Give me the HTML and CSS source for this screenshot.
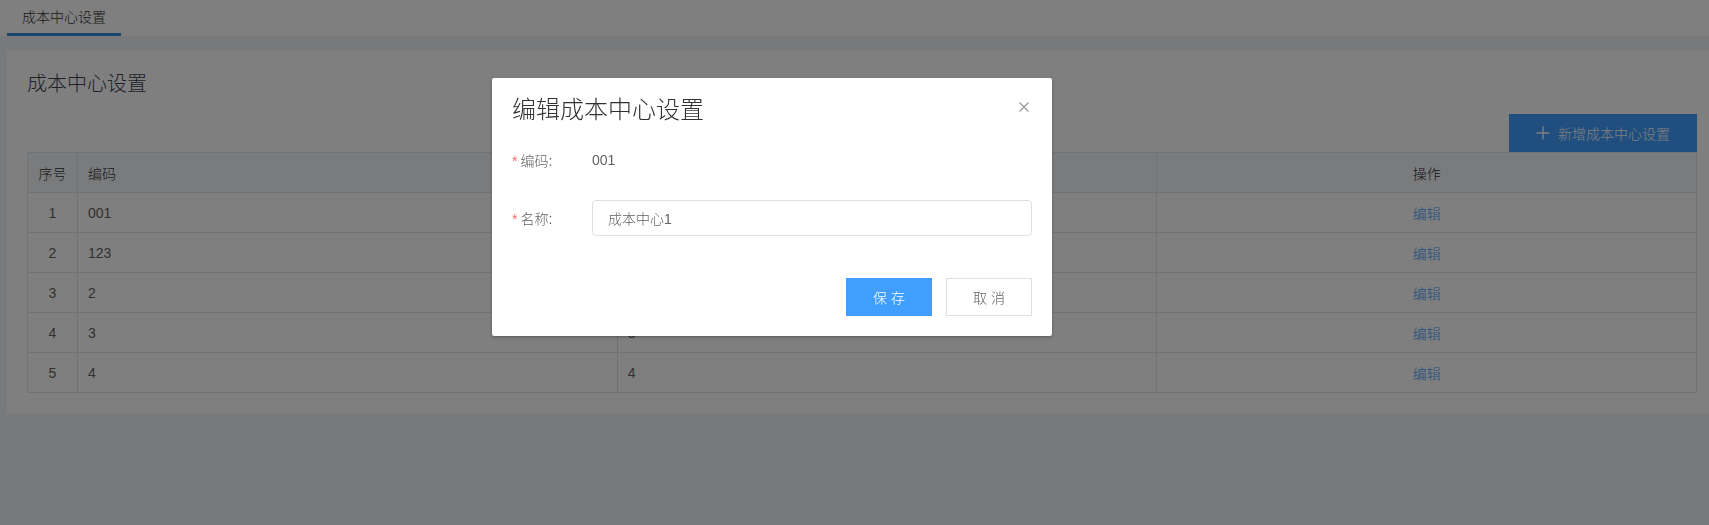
FILE: index.html
```html
<!DOCTYPE html>
<html lang="zh-CN">
<head>
<meta charset="utf-8">
<title>成本中心设置</title>
<link rel="stylesheet" href="styles.css">
</head>
<body>
<div class="tabs">
  <div class="tab active">成本中心设置</div>
</div>
<main class="page">
  <section class="card">
    <h2 class="card-title">成本中心设置</h2>
    <div class="toolbar">
      <button class="btn-add">
        <svg class="plus" viewBox="0 0 14 14" width="14" height="14"><path d="M7 0.5V13.5M0.5 7H13.5" stroke="currentColor" stroke-width="1.4" fill="none"/></svg>
        <span>新增成本中心设置</span>
      </button>
    </div>
    <table class="grid">
      <colgroup>
        <col class="c-idx"><col><col><col>
      </colgroup>
      <thead>
        <tr><th class="center">序号</th><th>编码</th><th>名称</th><th class="center">操作</th></tr>
      </thead>
      <tbody>
        <tr><td class="center">1</td><td>001</td><td>成本中心1</td><td class="center"><a class="link">编辑</a></td></tr>
        <tr><td class="center">2</td><td>123</td><td>123</td><td class="center"><a class="link">编辑</a></td></tr>
        <tr><td class="center">3</td><td>2</td><td>2</td><td class="center"><a class="link">编辑</a></td></tr>
        <tr><td class="center">4</td><td>3</td><td>3</td><td class="center"><a class="link">编辑</a></td></tr>
        <tr><td class="center">5</td><td>4</td><td>4</td><td class="center"><a class="link">编辑</a></td></tr>
      </tbody>
    </table>
  </section>
</main>

<div class="mask"></div>
<div class="dialog">
  <div class="dialog-header">
    <span class="dialog-title">编辑成本中心设置</span>
    <button class="dialog-close" aria-label="关闭">
      <svg viewBox="0 0 10 10" width="10" height="10"><path d="M0.5 0.5L9.5 9.5M9.5 0.5L0.5 9.5" stroke="currentColor" stroke-width="1.1" fill="none"/></svg>
    </button>
  </div>
  <div class="dialog-body">
    <div class="form-item">
      <label class="form-label"><span class="req">*</span>编码:</label>
      <div class="form-content">001</div>
    </div>
    <div class="form-item">
      <label class="form-label"><span class="req">*</span>名称:</label>
      <div class="form-content"><input class="input" type="text" value="成本中心1"></div>
    </div>
  </div>
  <div class="dialog-footer">
    <button class="btn btn-primary">保存</button>
    <button class="btn btn-default">取消</button>
  </div>
</div>
</body>
</html>
```

FILE: styles.css
```css
* { box-sizing: border-box; }
html, body {
  margin: 0;
  padding: 0;
}
body {
  background: #f0f2f5;
  font-family: "Liberation Sans", "Noto Sans CJK SC", sans-serif;
  font-size: 14px;
  font-weight: 300;
  color: #606266;
  height: 525px;
  overflow: hidden;
}
button, input { font-weight: 300; }

.tabs {
  height: 36px;
  background: #ffffff;
  display: flex;
  padding-left: 7px;
}
.tab {
  padding: 0 15px;
  height: 36px;
  line-height: 34px;
  color: #303133;
  font-size: 14px;
  border-bottom: 3px solid #3a8ee6;
  background: #ffffff;
}

.page {
  padding: 15px 0 0 7px;
}
.card {
  background: #ffffff;
  padding: 20px 12px 20px 20px;
}
.card-title {
  margin: 0;
  font-size: 20px;
  font-weight: 300;
  line-height: 26px;
  color: #3c4350;
}
.toolbar {
  display: flex;
  justify-content: flex-end;
  margin-top: 17px;
}
.btn-add {
  width: 188px;
  height: 38px;
  border: none;
  background: #409eff;
  color: #ffffff;
  font-family: inherit;
  font-size: 14px;
  display: flex;
  align-items: center;
  justify-content: center;
  gap: 8px;
  padding: 0;
}
.plus { width: 14px; height: 14px; }

.grid {
  width: 100%;
  border-collapse: collapse;
  table-layout: fixed;
  border: 1px solid #dfe6ec;
}
.c-idx { width: 50px; }
.grid th, .grid td {
  border: 1px solid #dfe6ec;
  height: 40px;
  padding: 0 10px;
  text-align: left;
  font-size: 14px;
  white-space: nowrap;
}
.grid th {
  background: #f5f7fa;
  color: #303133;
  font-weight: 300;
}
.grid td { color: #606266; }
.grid .center { text-align: center; }
.link { color: #409eff; text-decoration: none; }

.mask {
  position: fixed;
  inset: 0;
  background: rgba(0, 0, 0, 0.5);
}
.dialog {
  position: absolute;
  left: 492px;
  top: 78px;
  width: 560px;
  background: #ffffff;
  border-radius: 2px;
  box-shadow: 0 1px 3px rgba(0, 0, 0, 0.3);
  padding: 20px;
}
.dialog-header {
  position: relative;
  height: 24px;
}
.dialog-title {
  font-size: 24px;
  line-height: 24px;
  color: #303133;
}
.dialog-close {
  position: absolute;
  right: 3px;
  top: 4px;
  width: 10px;
  height: 10px;
  padding: 0;
  border: none;
  background: none;
  color: #909399;
  display: flex;
}
.dialog-body {
  padding-top: 20px;
  display: flex;
  flex-direction: column;
  gap: 22px;
}
.form-item {
  display: flex;
  height: 36px;
  align-items: center;
}
.form-label {
  width: 80px;
  flex: none;
  color: #606266;
  font-size: 14px;
}
.req {
  color: #f56c6c;
  margin-right: 3px;
}
.form-content {
  flex: 1;
  color: #606266;
}
.input {
  width: 100%;
  height: 36px;
  border: 1px solid #dcdfe6;
  border-radius: 4px;
  padding: 0 15px;
  font-family: inherit;
  font-size: 14px;
  color: #606266;
  outline: none;
}
.dialog-footer {
  margin-top: 42px;
  display: flex;
  justify-content: flex-end;
  gap: 14px;
}
.btn {
  width: 86px;
  height: 38px;
  font-family: inherit;
  font-size: 14px;
  letter-spacing: 4px;
  padding: 0 0 0 4px;
  border-radius: 0;
  cursor: pointer;
}
.btn-primary {
  background: #409eff;
  border: 1px solid #409eff;
  color: #ffffff;
}
.btn-default {
  background: #ffffff;
  border: 1px solid #dcdfe6;
  color: #606266;
}
```
